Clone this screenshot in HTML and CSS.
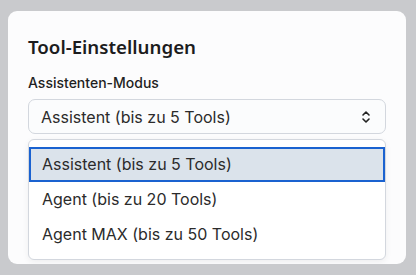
FILE: index.html
```html
<!DOCTYPE html>
<html lang="de">
<head>
    <meta charset="UTF-8">
    <meta name="viewport" content="width=device-width, initial-scale=1.0">
    <title>Tool-Einstellungen</title>
    <link rel="stylesheet" href="styles.css">
</head>
<body>
    <div class="card">
        <h2 class="card-title">Tool-Einstellungen</h2>
        <label class="field-label">Assistenten-Modus</label>
        <div class="select-box">
            <span>Assistent (bis zu 5 Tools)</span>
            <svg class="chevrons" width="10" height="16" viewBox="0 0 10 16">
                <path d="M2 6 L5 3 L8 6" fill="none" stroke="#222" stroke-width="1.6" stroke-linecap="round" stroke-linejoin="round"/>
                <path d="M2 10 L5 13 L8 10" fill="none" stroke="#222" stroke-width="1.6" stroke-linecap="round" stroke-linejoin="round"/>
            </svg>
        </div>
        <ul class="options">
            <li class="option selected">Assistent (bis zu 5 Tools)</li>
            <li class="option">Agent (bis zu 20 Tools)</li>
            <li class="option">Agent MAX (bis zu 50 Tools)</li>
        </ul>
    </div>
</body>
</html>
```

FILE: styles.css
```css
body {
    margin: 0;
    padding: 11px 10px 0 8px;
    background-color: #c9cacd;
    font-family: 'Inter', sans-serif;
    color: #2b2b2b;
}

.card {
    background-color: #fcfcfd;
    border-radius: 9px;
    padding: 24px 20px 4px 20px;
    box-sizing: border-box;
    height: 253px;
}

.card-title {
    font-family: 'Noto Sans', sans-serif;
    font-weight: 600;
    font-size: 18.7px;
    line-height: 24px;
    margin: 0 0 16px 0;
    color: #1c1c1e;
}

.field-label {
    display: block;
    font-size: 14px;
    font-weight: 500;
    line-height: 16px;
    margin-bottom: 8px;
    color: #1f1f22;
}

.select-box {
    display: flex;
    align-items: center;
    justify-content: space-between;
    height: 35px;
    box-sizing: border-box;
    padding: 0 14px 0 12px;
    border: 1px solid #d3d7de;
    border-radius: 7px;
    background-color: #fbfcfd;
    font-size: 16px;
}

.options {
    list-style: none;
    margin: 5px 0 0 0;
    padding: 7px 0;
    border: 1px solid #d3d7de;
    border-radius: 6px;
    background-color: #ffffff;
    box-shadow: 0 2px 6px rgba(0, 0, 0, 0.06);
}

.option {
    height: 35px;
    line-height: 35px;
    padding-left: 13px;
    font-size: 16px;
    box-sizing: border-box;
}

.option.selected {
    background-color: #dbe3eb;
    border: 2px solid #1a62d0;
    line-height: 31px;
    padding-left: 11px;
}
```
